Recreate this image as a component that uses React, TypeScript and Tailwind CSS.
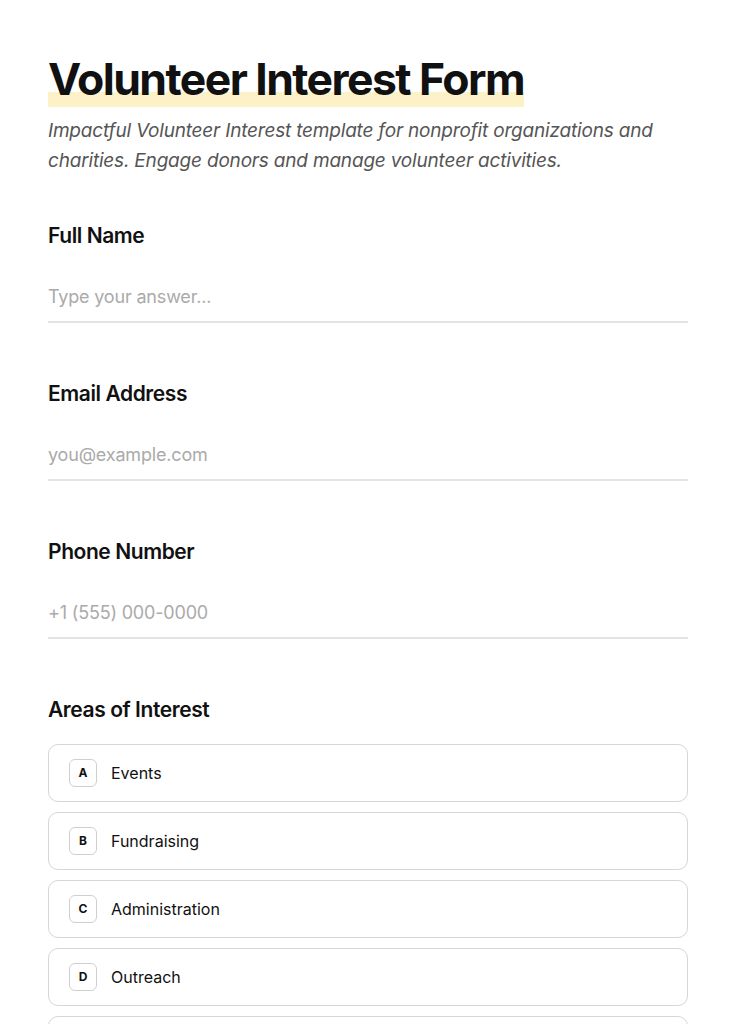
import React from 'react';

const fields = [
  { label: 'Full Name', placeholder: 'Type your answer...', type: 'text' },
  { label: 'Email Address', placeholder: 'you@example.com', type: 'email' },
  { label: 'Phone Number', placeholder: '+1 (555) 000-0000', type: 'tel' },
];

const options = ['Events', 'Fundraising', 'Administration', 'Outreach', 'Education'];

export default function App() {
  return (
    <div className="min-h-screen bg-white text-[#111] font-['Inter',sans-serif]">
      <div className="px-12 pt-[53px] pb-16">
        <h1 className="text-[44.5px] font-bold leading-[52px] tracking-[-0.035em]">
          <span className="bg-[linear-gradient(transparent_72%,#fdf1c7_72%)] pb-[1px]">Volunteer Interest Form</span>
        </h1>
        <p className="mt-[11px] text-[19px] leading-[30px] italic text-[#555] tracking-[-0.01em]">
          Impactful Volunteer Interest template for nonprofit organizations and charities. Engage donors and manage volunteer activities.
        </p>

        <div className="mt-[44px] flex flex-col gap-[55px]">
          {fields.map((f) => (
            <div key={f.label}>
              <label className="block text-[21px] font-semibold leading-[32px] tracking-[-0.02em]">{f.label}</label>
              <input
                type={f.type}
                placeholder={f.placeholder}
                className="mt-[31px] w-full border-b-2 border-[#e4e4e4] pb-[10px] text-[18px] leading-[28px] placeholder:text-[#aaa] outline-none tracking-[-0.01em]"
              />
            </div>
          ))}

          <div>
            <label className="block text-[21px] font-semibold leading-[32px] tracking-[-0.02em]">Areas of Interest</label>
            <div className="mt-[18px] flex flex-col gap-[10px]">
              {options.map((o, i) => (
                <button
                  key={o}
                  className="flex h-[58px] items-center gap-[14px] rounded-[10px] border border-[#d6d6d6] px-5 text-left"
                >
                  <span className="flex h-7 w-7 items-center justify-center rounded-[6px] border border-[#cfcfcf] text-[12px] font-bold">
                    {String.fromCharCode(65 + i)}
                  </span>
                  <span className="text-[16px]">{o}</span>
                </button>
              ))}
            </div>
          </div>
        </div>
      </div>
    </div>
  );
}
